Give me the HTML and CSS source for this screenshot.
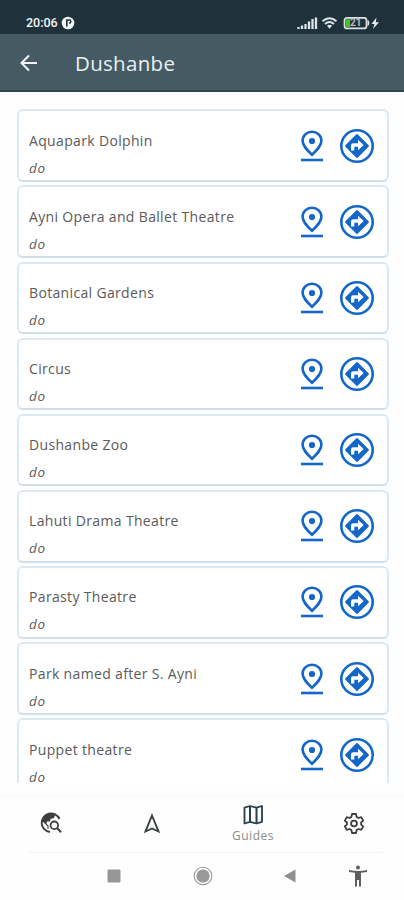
FILE: index.html
```html
<!DOCTYPE html>
<html lang="en">
<head>
<meta charset="utf-8">
<title>Dushanbe</title>
<link rel="stylesheet" href="styles.css">
</head>
<body>
<svg class="defs" aria-hidden="true">
  <symbol id="pin" viewBox="0 0 24 34">
    <path d="M12 2.700c-5.200 0-9.400 4-9.400 9.100 0 4.700 3.600 8.500 9.400 14 5.800-5.500 9.400-9.300 9.400-14 0-5.100-4.200-9.100-9.400-9.100z" fill="none" stroke="currentColor" stroke-width="2.600"/>
    <circle cx="12" cy="12" r="3.100" fill="currentColor"/>
    <path d="M1 31h22" stroke="currentColor" stroke-width="2.600"/>
  </symbol>
  <symbol id="route" viewBox="0 0 36 36">
    <circle cx="18" cy="18" r="15.700" fill="none" stroke="currentColor" stroke-width="2.600"/>
    <path d="M18 7 29 18 18 29 7 18z" fill="currentColor" stroke="currentColor" stroke-width="1.800" stroke-linejoin="round"/>
    <path d="M12 22.500v-5q0-2.200 2.200-2.200h4.800v-3.600l5.700 5.300-5.700 5.300v-3.600h-3.700v3.800z" fill="#fff"/>
  </symbol>
</svg>
<div class="status">
  <span class="clock">20:06</span>
  <svg class="badge" viewBox="0 0 14 14"><circle cx="7" cy="7" r="6.300" fill="#f2f5f6"/><path d="M5.800 10.500V4h2.400q1.600 0 1.600 1.500T8.200 7.200" fill="none" stroke="#1f313a" stroke-width="1.600"/></svg>
  <svg class="signals" viewBox="0 0 84 16">
    <path d="M2.500 14v-2M6 14v-3.500M9.500 14V9M13 14V6.500M16.500 14V4M20 14V2.500" stroke="#dfe4e7" stroke-width="2.300"/>
    <g fill="none" stroke="#dfe4e7" stroke-width="1.900"><path d="M26.500 6.200q7-6 14 0M29 9q4.500-3.800 9 0"/><path d="M31 10.800q2.500-2 5 0L33.500 13.800z" fill="#dfe4e7" stroke="none"/></g>
    <rect x="48.500" y="2.800" width="22" height="10.600" rx="2.500" fill="#263239" stroke="#dfe2e4" stroke-width="1.700"/>
    <path d="M72 5.500q2 2.500 0 5z" fill="#dfe2e4" stroke="#dfe2e4"/>
    <path d="M50 4.300h4v7.600h-4z" fill="#4cc21c"/>
    <text class="level" x="54" y="11.400">21</text>
    <path d="m80.500 2.500-5 6.500h3l-1.500 5 6-6.700h-3.200z" fill="#e8ecee"/>
  </svg>
</div>
<header class="bar">
  <svg class="back" viewBox="0 0 20 20"><path d="M18 10H3M10 2.500 2.500 10l7.500 7.500" fill="none" stroke="#f0f5f7" stroke-width="2"/></svg>
  <h1>Dushanbe</h1>
</header>
<main class="list">
  <article class="card"><div class="info"><h2>Aquapark Dolphin</h2><p>do</p></div><svg class="pin"><use href="#pin"/></svg><svg class="route"><use href="#route"/></svg></article>
  <article class="card"><div class="info"><h2>Ayni Opera and Ballet Theatre</h2><p>do</p></div><svg class="pin"><use href="#pin"/></svg><svg class="route"><use href="#route"/></svg></article>
  <article class="card"><div class="info"><h2>Botanical Gardens</h2><p>do</p></div><svg class="pin"><use href="#pin"/></svg><svg class="route"><use href="#route"/></svg></article>
  <article class="card"><div class="info"><h2>Circus</h2><p>do</p></div><svg class="pin"><use href="#pin"/></svg><svg class="route"><use href="#route"/></svg></article>
  <article class="card"><div class="info"><h2>Dushanbe Zoo</h2><p>do</p></div><svg class="pin"><use href="#pin"/></svg><svg class="route"><use href="#route"/></svg></article>
  <article class="card"><div class="info"><h2>Lahuti Drama Theatre</h2><p>do</p></div><svg class="pin"><use href="#pin"/></svg><svg class="route"><use href="#route"/></svg></article>
  <article class="card"><div class="info"><h2>Parasty Theatre</h2><p>do</p></div><svg class="pin"><use href="#pin"/></svg><svg class="route"><use href="#route"/></svg></article>
  <article class="card"><div class="info"><h2>Park named after S. Ayni</h2><p>do</p></div><svg class="pin"><use href="#pin"/></svg><svg class="route"><use href="#route"/></svg></article>
  <article class="card"><div class="info"><h2>Puppet theatre</h2><p>do</p></div><svg class="pin"><use href="#pin"/></svg><svg class="route"><use href="#route"/></svg></article>
</main>
<nav class="tabs">
  <div class="tab">
    <svg viewBox="0 0 24 24"><path d="M20.500 8A9.300 9.300 0 1 0 11 21" fill="none" stroke="#3c3f41" stroke-width="1.900"/><path d="M3 11C4 5 8 2.500 13 2.800l3 1.200-1 3-3.500 1-.5 2.500H8L7.500 13 5 11z" fill="#3c3f41"/><path d="m4 10 5 5v3" fill="none" stroke="#3c3f41" stroke-width="1.100"/><circle cx="15.300" cy="14.300" r="3.800" fill="#fff" stroke="#3c3f41" stroke-width="1.800"/><path d="m18 17 4 4.300" stroke="#3c3f41" stroke-width="2"/></svg>
  </div>
  <div class="tab">
    <svg viewBox="0 0 24 24"><path d="M12 4.500 18.500 20.500 12 17.500 5.500 20.500z" fill="none" stroke="#3c3f41" stroke-width="1.900"/></svg>
  </div>
  <div class="tab active">
    <svg viewBox="0 0 24 24"><path d="M3.500 4.700 9 3l6.500 1.700L21 3v15.800l-5.500 1.700L9 18.800l-5.500 1.700z" fill="#fff" stroke="#24414d" stroke-width="1.800" stroke-linejoin="round"/><path d="M9 3v15.500M15.500 4.700V20.500" stroke="#24414d" stroke-width="2"/></svg>
    <span>Guides</span>
  </div>
  <div class="tab">
    <svg viewBox="0 0 24 24"><path d="M10 3h4l.6 2.900 1.900 1.100 2.700-.9 2 3.500-2.100 1.900v2l2.100 1.900-2 3.500-2.700-.9-1.900 1.100L14 22h-4l-.6-2.900L7.500 18l-2.700.9-2-3.500 2.100-1.900v-2L2.800 9.600l2-3.500 2.700.9 1.900-1.100z" fill="none" stroke="#3c3f41" stroke-width="1.800" stroke-linejoin="round"/><circle cx="12" cy="12.500" r="2.900" fill="none" stroke="#3c3f41" stroke-width="1.800"/></svg>
  </div>
</nav>
<footer class="system">
  <svg viewBox="0 0 24 24"><path d="M6 6h12v12H6z" fill="#969696" stroke="#969696" stroke-linejoin="round"/></svg>
  <svg viewBox="0 0 24 24"><circle cx="12" cy="12" r="8.800" fill="none" stroke="#999" stroke-width="1.100"/><circle cx="12" cy="12" r="6.600" fill="#999"/></svg>
  <svg viewBox="0 0 24 24"><path d="M17.500 5.500v13L6 12z" fill="#8f8f8f"/></svg>
  <svg viewBox="0 0 24 24"><circle cx="12" cy="3.500" r="2" fill="#5e5e5e"/><path d="M3 6q9 2 18 0v2l-6 .800V22.500h-2v-6.500h-2v6.500H9V8.800L3 8z" fill="#5e5e5e"/></svg>
</footer>
</body>
</html>
```
FILE: styles.css
```css
* { box-sizing: border-box; }
body {
  margin: 0;
  width: 404px;
  height: 900px;
  overflow: hidden;
  display: flex;
  flex-direction: column;
  background: #fefefe;
  font-family: "Open Sans", "Noto Sans", sans-serif;
}
svg { display: block; flex: none; }
.defs { position: absolute; width: 0; height: 0; }
.status {
  height: 34px;
  flex: none;
  display: flex;
  align-items: center;
  padding: 12px 24px 0 26px;
  background: #1f313a;
  color: #f2f5f6;
}
.clock {
  font: 500 12.5px/16px Roboto, sans-serif;
  width: 35px;
}
.badge { width: 14px; height: 14px; }
.signals { width: 84px; height: 16px; margin-left: auto; }
.level { font: 700 10px Roboto, sans-serif; fill: #b9bdc0; }
.bar {
  height: 58px;
  flex: none;
  display: flex;
  align-items: center;
  padding-left: 19px;
  background: #465a64;
  border-bottom: 2px solid #28474f;
}
.back { width: 20px; height: 20px; margin-top: 2px; }
.bar h1 {
  margin: 1px 0 0 36px;
  font-size: 20.5px;
  line-height: 28px;
  font-weight: 400;
  letter-spacing: .3px;
  color: #e9f0f4;
}
.list {
  height: 691px;
  flex: none;
  overflow: hidden;
  padding: 17.3px 15.5px 0 16.5px;
}
.card {
  height: 72.6px;
  margin-bottom: 3.55px;
  padding: 0 11.5px 0 10.5px;
  display: flex;
  align-items: center;
  background: #fff;
  border: 2px solid #dbe9f5;
  border-bottom-color: #cfdfec;
  border-radius: 6px;
}
.info { flex: 1; padding-top: 16px; }
.info h2 {
  margin: 0;
  font-size: 14px;
  line-height: 20px;
  font-weight: 400;
  letter-spacing: .34px;
  color: #5a5a5a;
}
.info p {
  margin: 8px 0 0;
  font-size: 13.5px;
  line-height: 18px;
  font-style: italic;
  letter-spacing: .6px;
  color: #5a5a5a;
}
.pin, .route { color: #1467c9; }
.pin { width: 24px; height: 34px; margin-right: 15.5px; }
.route { width: 36px; height: 36px; }
.tabs {
  height: 57px;
  flex: none;
  margin-top: 12px;
  display: grid;
  grid-template-columns: repeat(4, 101px);
  border-top: 1px solid #f8f8f8;
}
.tab {
  display: flex;
  flex-direction: column;
  align-items: center;
  justify-content: center;
  padding-bottom: 3px;
}
.tab svg { width: 24px; height: 24px; }
.active { padding: 0 0 0 1px; }
.active svg { margin-top: -2px; margin-bottom: 1px; }
.tab span {
  font-size: 12px;
  line-height: 16px;
  letter-spacing: .5px;
  color: #8b8b8b;
}
.system {
  flex: 1;
  margin: 0 22px 0 28px;
  padding: 0 0 1.5px 74px;
  border-top: 1px solid #f5f5f5;
  display: grid;
  grid-template-columns: 88.5px 87px 68px 24px;
  align-items: center;
}
.system svg { width: 24px; height: 24px; }
```
